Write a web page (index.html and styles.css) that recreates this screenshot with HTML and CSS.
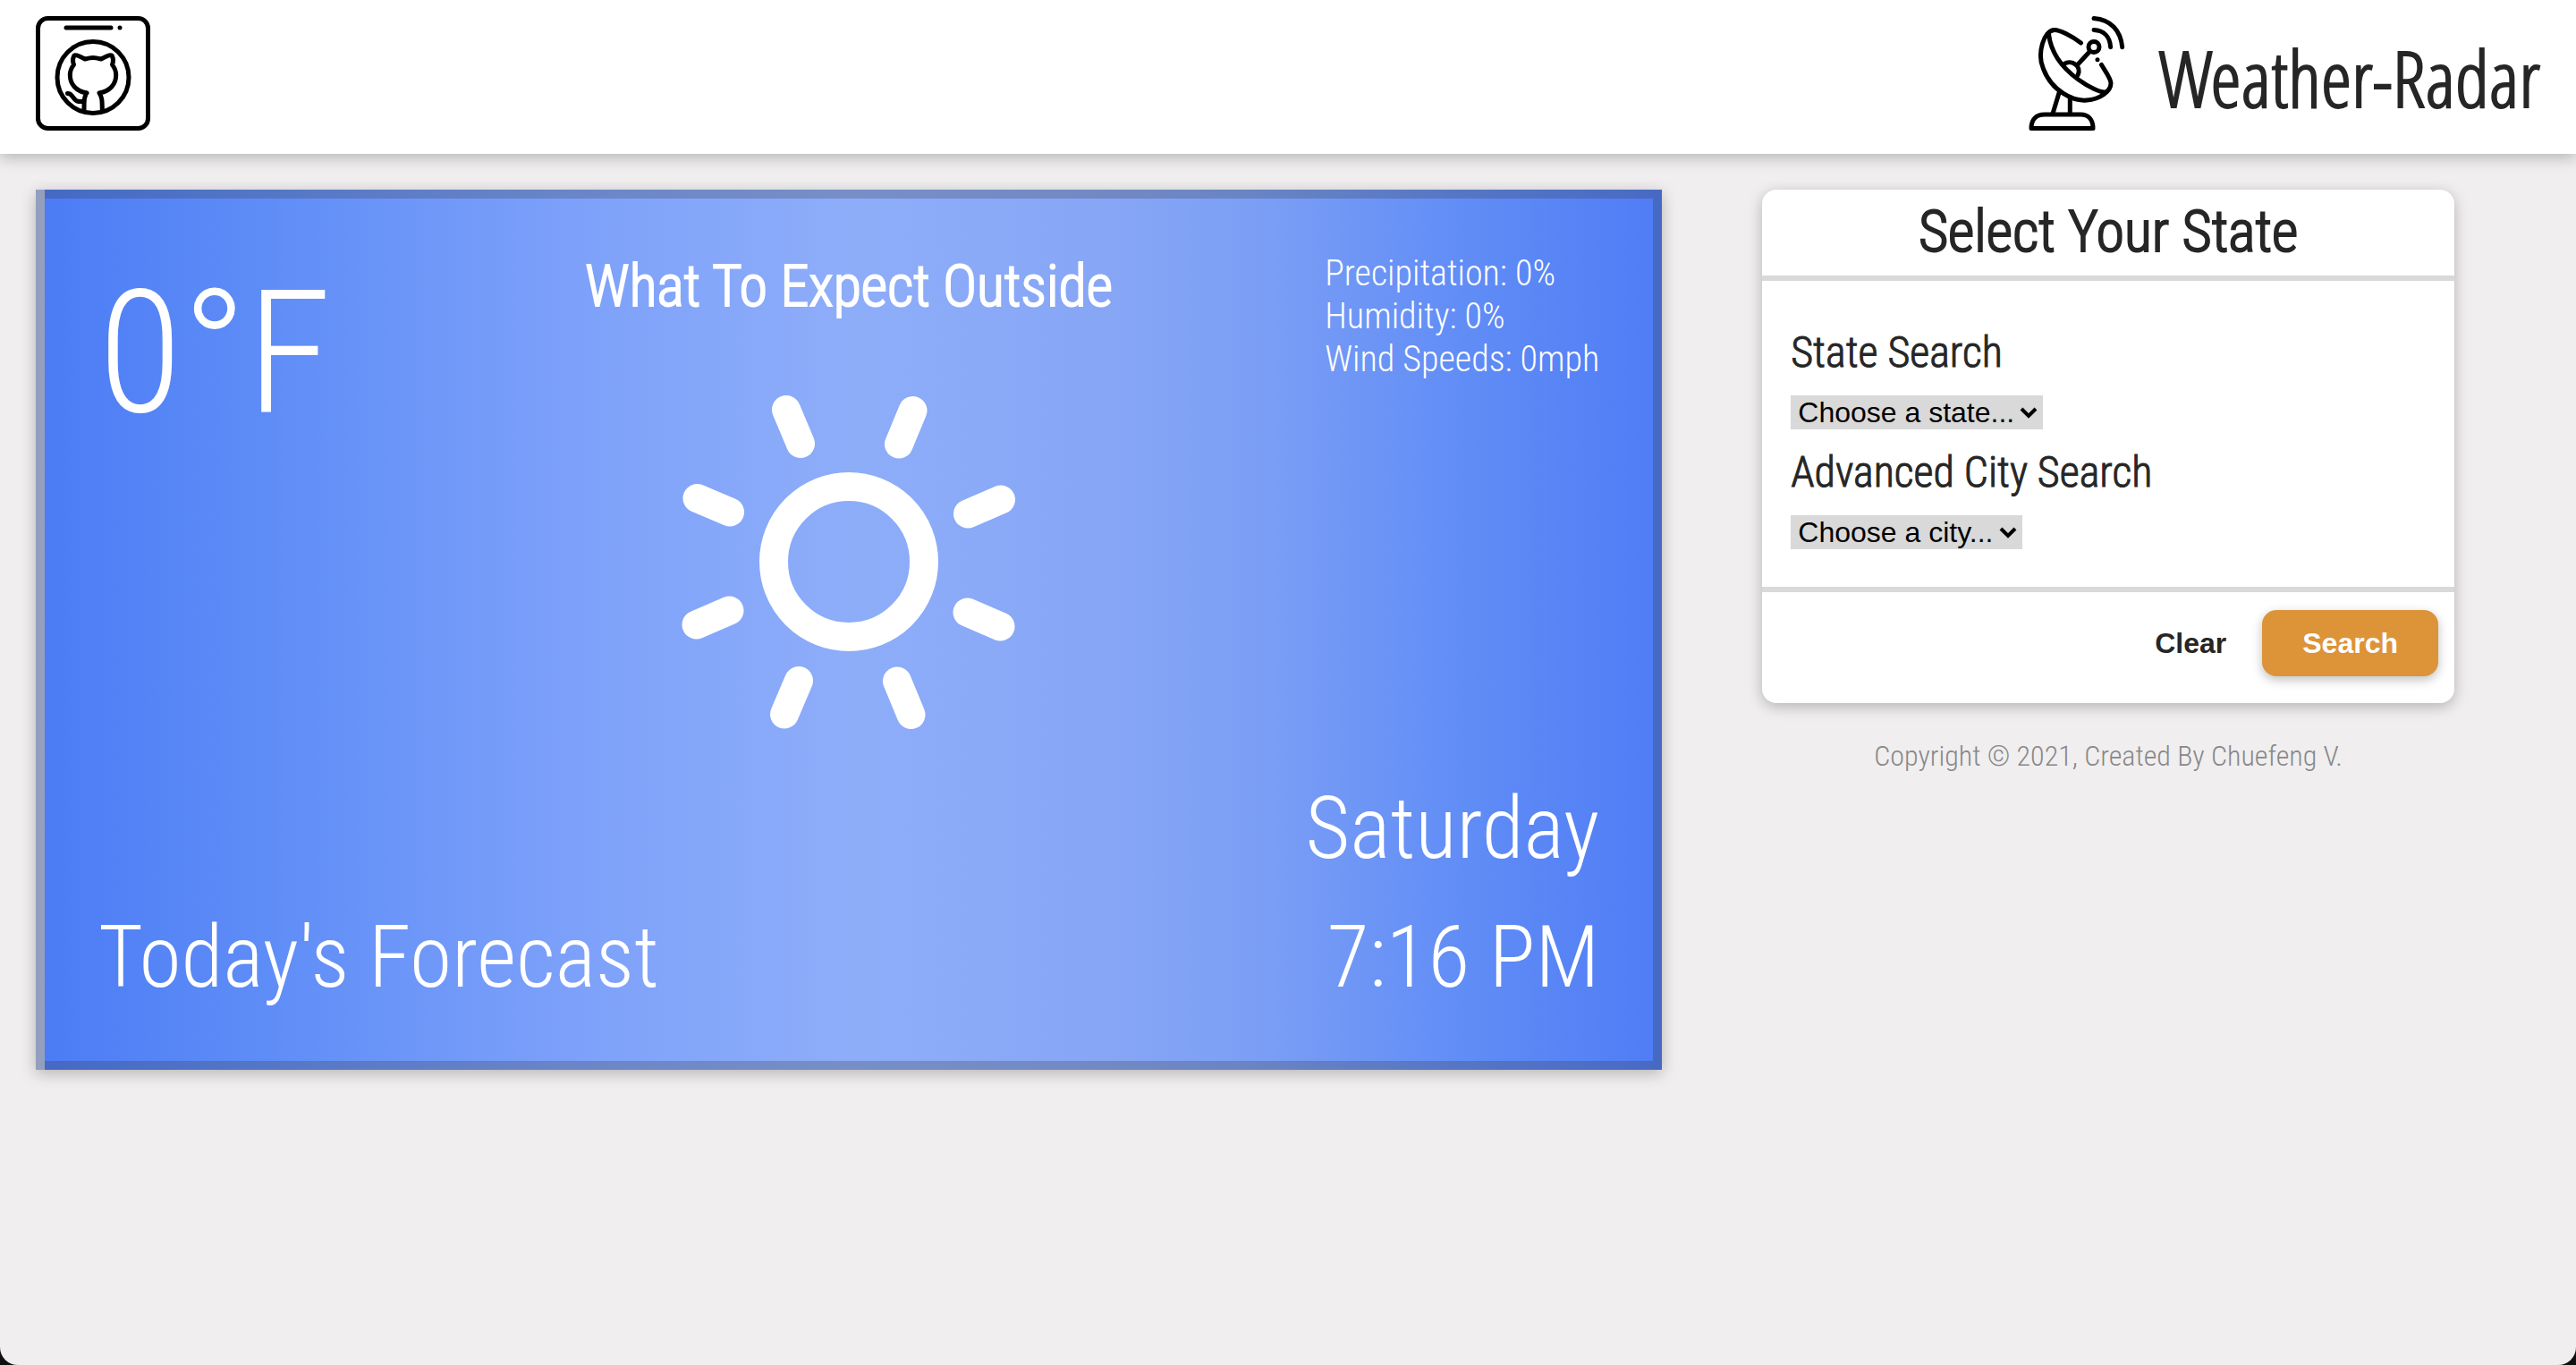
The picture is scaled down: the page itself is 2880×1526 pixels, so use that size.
FILE: index.html
```html
<!DOCTYPE html>
<html lang="en">
<head>
<meta charset="utf-8">
<meta name="viewport" content="width=device-width, initial-scale=1">
<title>Weather-Radar</title>
<link rel="stylesheet" href="styles.css">
</head>
<body>
<header class="site-header">
  <a class="icon-link" href="#" aria-label="GitHub repository">
    <svg class="icon" viewBox="0 0 128 128" fill="none" stroke="#000" stroke-width="5" stroke-linecap="round" stroke-linejoin="round" aria-hidden="true">
      <rect x="2.5" y="2.5" width="123" height="123" rx="11"/>
      <path d="M34 13H84M94 13V13.1"/>
      <circle cx="64" cy="68.5" r="40"/>
      <path d="M57 86C45 84 38.300 76 38.300 66C38.300 61 40 57.500 42.500 54.500C41 50.500 41.300 47 43 44C44.500 42.500 50 45 55 48C59 47 61 46.500 64 46.500C67 46.500 69 47 73 48C78 45 83.500 42.500 85 44C86.700 47 87 50.500 85.500 54.500C88 57.500 89.700 61 89.700 66C89.700 76 83 84 71 86C74 90 74.300 94 74.300 106M57 86C54 90 54 94 54 106M35.500 86.500C42 86 41 95 48 95.500H53"/>
    </svg>
  </a>
  <div class="brand">
    <svg class="icon" viewBox="0 0 128 128" fill="none" stroke="#000" stroke-width="5" stroke-linecap="round" stroke-linejoin="round" aria-hidden="true">
      <path d="M13 125.500H82C82 116 77 110 68 110H28C18 110 13 116 13 125.500Z"/>
      <path d="M44 86 37 109M56.300 93V109"/>
      <path d="M68.500 30C58 22 45 15.500 39 15.500C27 15.500 19 42 26.500 59C36 84 60 95.500 75 94C90 93 102 84 102 75C102 70 96 62 91.500 54.500"/>
      <path d="M32.500 20C35 42 49 59 65.700 71C76 78.500 92 87 97 84.500"/>
      <circle cx="83" cy="34.500" r="6"/>
      <path d="M78.500 39.500 65 54"/>
      <path d="M49.500 53.500C58 48 70 56 65 66"/>
      <path d="M87 48.700V48.800"/>
      <path d="M83 15.500C94 16 101 23 101.600 34.700M83 2.500C102 4 113 16 114.700 34.700"/>
    </svg>
    <h1 class="brand-name">Weather-Radar</h1>
  </div>
</header>

<main class="layout">
  <section class="weather">
    <p class="temperature">0°F</p>
    <div class="outlook">
      <h2 class="outlook-title">What To Expect Outside</h2>
      <svg class="sun" viewBox="-206 -206 412 412" fill="none" stroke="#fff" stroke-width="32" stroke-linecap="round" aria-hidden="true">
        <circle r="84"/>
        <path d="M-70-170-54-132M71.500-169 56-131.500M170-69.500 133-53.500M132.500 56.500 169.500 72.500M54 133.500 69.500 171M-56 133-72 170.500M-133.500 54.500-170.500 70.500M-169.500-71-133-55.500"/>
      </svg>
    </div>
    <ul class="details">
      <li>Precipitation: 0%</li>
      <li>Humidity: 0%</li>
      <li>Wind Speeds: 0mph</li>
    </ul>
    <p class="forecast">Today's Forecast</p>
    <div class="moment">
      <p>Saturday</p>
      <p>7:16 PM</p>
    </div>
  </section>

  <aside class="sidebar">
    <form class="panel">
      <h2 class="panel-title">Select Your State</h2>
      <div class="fields">
        <label class="field-label" for="state">State Search</label>
        <span class="picker">
          <select id="state"><option>Choose a state...</option></select>
          <svg class="chevron" viewBox="0 0 20 16" aria-hidden="true"><path d="M2 4 10 12 18 4"/></svg>
        </span>
        <label class="field-label" for="city">Advanced City Search</label>
        <span class="picker">
          <select id="city"><option>Choose a city...</option></select>
          <svg class="chevron" viewBox="0 0 20 16" aria-hidden="true"><path d="M2 4 10 12 18 4"/></svg>
        </span>
      </div>
      <div class="actions">
        <button class="button" type="reset">Clear</button>
        <button class="button button-primary" type="button">Search</button>
      </div>
    </form>
    <footer class="copyright">Copyright © 2021, Created By Chuefeng V.</footer>
  </aside>
</main>
</body>
</html>
```
FILE: styles.css
```css
* {
  box-sizing: border-box;
  margin: 0;
  padding: 0;
}

html {
  background: #111;
}

body {
  min-height: 100vh;
  border-radius: 0 0 20px 20px;
  background: #f0eeef;
  color: #262626;
  font-family: "Roboto Condensed", Roboto, sans-serif;
}

/* Header */

.site-header {
  display: flex;
  align-items: center;
  justify-content: space-between;
  padding: 18px 40px 26px;
  background: #fff;
  box-shadow: 0 4px 16px rgba(0, 0, 0, 0.25);
}

.icon-link,
.icon {
  display: block;
}

.icon {
  width: 128px;
  height: 128px;
}

.brand {
  display: flex;
  align-items: flex-end;
  gap: 28px;
}

.brand-name {
  font-family: "Open Sans Condensed Light", "Open Sans Condensed", "Roboto Condensed", sans-serif;
  font-size: 87px;
  font-weight: 300;
  line-height: 120px;
  -webkit-text-stroke: 2px;
}

/* Page columns */

.layout {
  display: grid;
  grid-template-columns: 47fr 20fr;
  align-items: start;
  gap: 112px;
  padding: 40px 136px 40px 40px;
}

/* Weather card */

.weather {
  display: grid;
  grid-template-columns: 1fr auto 1fr;
  row-gap: 36px;
  padding: 60px;
  border: 10px solid rgba(51, 51, 51, 0.25);
  background:
    linear-gradient(#b4c3ec, #b4c3ec) 0 0 / 10px 100% no-repeat border-box,
    linear-gradient(90deg, #4c7cf5 0%, #5f8df7 14%, #7da1fa 33%, #8eadf9 50%, #86a5f5 67%, #7a9ef5 76%, #618df6 88%, #507df5 100%);
  box-shadow: 0 4px 16px rgba(0, 0, 0, 0.25);
  color: #fff;
  font-weight: 300;
}

.temperature {
  font-size: 192px;
  line-height: 225px;
}

.outlook {
  display: flex;
  flex-direction: column;
  align-items: center;
  gap: 62px;
}

.outlook-title,
.panel-title,
.field-label {
  font-family: "Roboto Condensed Light", "Roboto Condensed", sans-serif;
  font-weight: 300;
}

.outlook-title {
  font-size: 64px;
  line-height: 78px;
  -webkit-text-stroke: 2px;
}

.sun {
  width: 412px;
  height: 412px;
}

.details {
  justify-self: end;
  list-style: none;
  font-size: 40px;
  line-height: 48px;
}

.forecast {
  grid-column: 1 / 3;
  align-self: end;
  font-size: 96px;
  line-height: 112px;
}

.moment {
  display: flex;
  flex-direction: column;
  gap: 32px;
  font-size: 96px;
  line-height: 112px;
  text-align: right;
}

/* Search panel */

.panel {
  border-radius: 16px;
  background: #fff;
  box-shadow: 0 4px 16px rgba(0, 0, 0, 0.25);
}

.panel-title {
  font-size: 64px;
  line-height: 96px;
  text-align: center;
  -webkit-text-stroke: 2px;
}

.fields {
  display: flex;
  flex-direction: column;
  align-items: flex-start;
  gap: 20px;
  padding: 52px 32px 42px;
  border: solid #d9d9d9;
  border-width: 6px 0;
}

.field-label {
  font-size: 48px;
  line-height: 56px;
  -webkit-text-stroke: 1px;
}

.picker {
  display: grid;
  align-items: center;
  background: #d9d9d9;
}

.picker select,
.chevron {
  grid-area: 1 / 1;
}

.picker select {
  appearance: none;
  padding: 0 32px 0 8px;
  border: 0;
  background: none;
  color: #000;
  font: 32px/38px "Liberation Sans", Arial, sans-serif;
}

.chevron {
  justify-self: end;
  width: 20px;
  height: 16px;
  margin-right: 6px;
  fill: none;
  stroke: #000;
  stroke-width: 4;
  pointer-events: none;
}

.actions {
  display: flex;
  justify-content: flex-end;
  padding: 20px 18px 30px;
}

.button {
  padding: 18px 40px;
  border: 0;
  border-radius: 16px;
  background: none;
  color: #262626;
  font: bold 32px/38px "Liberation Sans", Arial, sans-serif;
}

.button-primary {
  padding: 18px 45px;
  background: #dd9338;
  box-shadow: 0 4px 12px rgba(0, 0, 0, 0.25);
  color: #fff;
}

.copyright {
  padding-top: 40px;
  color: #888;
  font-size: 32px;
  font-weight: 300;
  line-height: 38px;
  text-align: center;
}
```
